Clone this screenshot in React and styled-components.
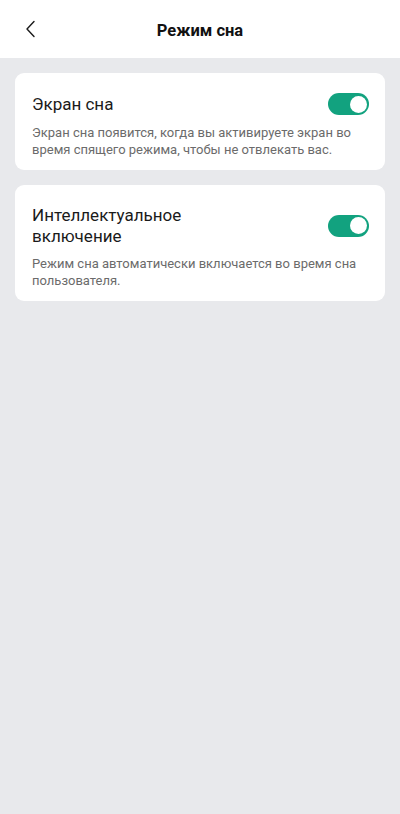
import React, { useState } from "react";
import styled, { createGlobalStyle } from "styled-components";

const Global = createGlobalStyle`
  html, body { margin: 0; padding: 0; background: #e8e9ec; }
  body { font-family: Roboto, "Noto Sans", "Liberation Sans", sans-serif; -webkit-font-smoothing: antialiased; }
  * { box-sizing: border-box; }
`;

const Page = styled.div`
  min-height: 814px;
  background: #e8e9ec;
  display: flex;
  flex-direction: column;
`;

const Header = styled.header`
  height: 58px;
  background: #ffffff;
  display: grid;
  grid-template-columns: 56px 1fr 56px;
  align-items: center;
`;

const BackButton = styled.button`
  border: none;
  background: transparent;
  padding: 0 0 0 24px;
  height: 58px;
  display: flex;
  align-items: center;
  cursor: pointer;
  margin-top: -1px;
`;

const Title = styled.h1`
  margin: 0;
  text-align: center;
  font-size: 16.5px;
  font-weight: 700;
  color: #111111;
  margin-top: 2px;
`;

const List = styled.main`
  display: flex;
  flex-direction: column;
  gap: 15px;
  padding: 15px 15px;
`;

const Card = styled.section`
  background: #ffffff;
  border-radius: 9px;
  padding: 20px 16px 12px 17px;
`;

const Row = styled.div`
  display: flex;
  align-items: center;
  justify-content: space-between;
  gap: 12px;
`;

const ItemTitle = styled.div`
  font-size: 17px;
  line-height: 20.5px;
  color: #1a1a1a;
  max-width: 210px;
`;

const Desc = styled.p`
  margin: 9px 0 0;
  font-size: 13px;
  line-height: 17px;
  color: #6b6b6b;
`;

const Track = styled.button`
  flex: none;
  width: 41px;
  height: 22px;
  border-radius: 11px;
  border: none;
  padding: 0;
  background: ${(p) => (p.$on ? "#12a27f" : "#c9cacd")};
  position: relative;
  cursor: pointer;
`;

const Knob = styled.span`
  position: absolute;
  top: 2.5px;
  left: ${(p) => (p.$on ? "21.5px" : "2.5px")};
  width: 17px;
  height: 17px;
  border-radius: 50%;
  background: #ffffff;
`;

function Toggle({ on, onClick }) {
  return (
    <Track $on={on} onClick={onClick} aria-pressed={on}>
      <Knob $on={on} />
    </Track>
  );
}

export default function App() {
  const [a, setA] = useState(true);
  const [b, setB] = useState(true);
  return (
    <Page>
      <Global />
      <Header>
        <BackButton aria-label="Назад">
          <svg width="12" height="18" viewBox="0 0 12 18" fill="none">
            <path d="M10 1.5 L3 9 L10 16.5" stroke="#1a1a1a" strokeWidth="1.4" strokeLinecap="round" strokeLinejoin="round" />
          </svg>
        </BackButton>
        <Title>Режим сна</Title>
        <div />
      </Header>
      <List>
        <Card>
          <Row>
            <ItemTitle>Экран сна</ItemTitle>
            <Toggle on={a} onClick={() => setA(!a)} />
          </Row>
          <Desc>Экран сна появится, когда вы активируете экран во время спящего режима, чтобы не отвлекать вас.</Desc>
        </Card>
        <Card>
          <Row>
            <ItemTitle>Интеллектуальное включение</ItemTitle>
            <Toggle on={b} onClick={() => setB(!b)} />
          </Row>
          <Desc>Режим сна автоматически включается во время сна пользователя.</Desc>
        </Card>
      </List>
    </Page>
  );
}
